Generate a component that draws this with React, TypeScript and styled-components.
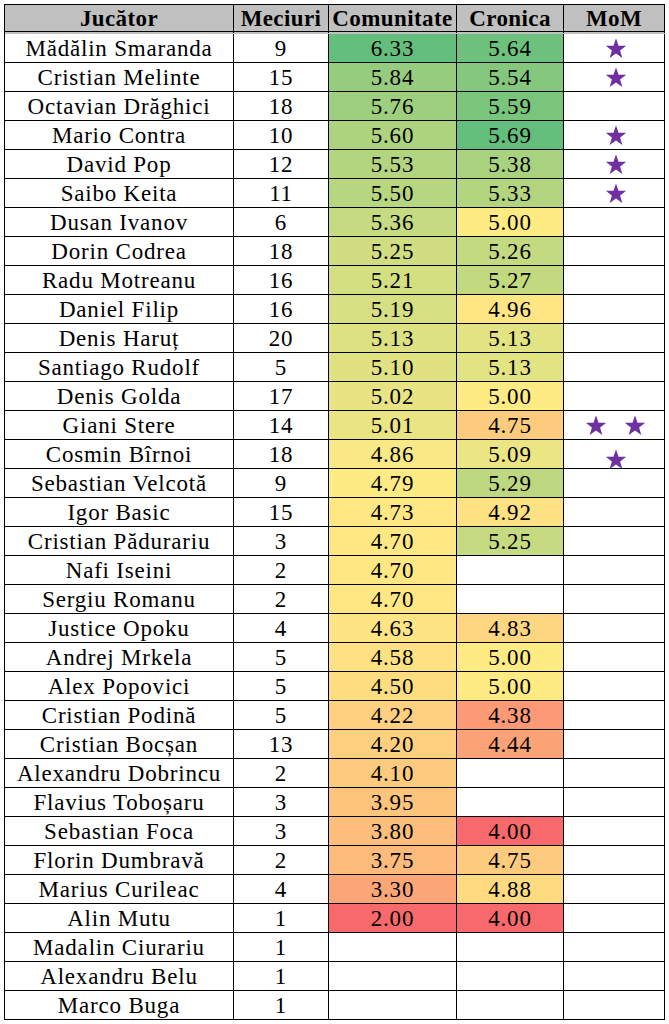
import React from "react"
import styled, { createGlobalStyle } from "styled-components"

type Row = {
  name: string
  games: number
  community?: number
  chronicle?: number
  mom?: number
  lowStar?: boolean
}

const rows: Row[] = [
  { name: "Mădălin Smaranda", games: 9, community: 6.33, chronicle: 5.64, mom: 1 },
  { name: "Cristian Melinte", games: 15, community: 5.84, chronicle: 5.54, mom: 1 },
  { name: "Octavian Drăghici", games: 18, community: 5.76, chronicle: 5.59 },
  { name: "Mario Contra", games: 10, community: 5.6, chronicle: 5.69, mom: 1 },
  { name: "David Pop", games: 12, community: 5.53, chronicle: 5.38, mom: 1 },
  { name: "Saibo Keita", games: 11, community: 5.5, chronicle: 5.33, mom: 1 },
  { name: "Dusan Ivanov", games: 6, community: 5.36, chronicle: 5.0 },
  { name: "Dorin Codrea", games: 18, community: 5.25, chronicle: 5.26 },
  { name: "Radu Motreanu", games: 16, community: 5.21, chronicle: 5.27 },
  { name: "Daniel Filip", games: 16, community: 5.19, chronicle: 4.96 },
  { name: "Denis Haruț", games: 20, community: 5.13, chronicle: 5.13 },
  { name: "Santiago Rudolf", games: 5, community: 5.1, chronicle: 5.13 },
  { name: "Denis Golda", games: 17, community: 5.02, chronicle: 5.0 },
  { name: "Giani Stere", games: 14, community: 5.01, chronicle: 4.75, mom: 2 },
  { name: "Cosmin Bîrnoi", games: 18, community: 4.86, chronicle: 5.09, mom: 1, lowStar: true },
  { name: "Sebastian Velcotă", games: 9, community: 4.79, chronicle: 5.29 },
  { name: "Igor Basic", games: 15, community: 4.73, chronicle: 4.92 },
  { name: "Cristian Pădurariu", games: 3, community: 4.7, chronicle: 5.25 },
  { name: "Nafi Iseini", games: 2, community: 4.7 },
  { name: "Sergiu Romanu", games: 2, community: 4.7 },
  { name: "Justice Opoku", games: 4, community: 4.63, chronicle: 4.83 },
  { name: "Andrej Mrkela", games: 5, community: 4.58, chronicle: 5.0 },
  { name: "Alex Popovici", games: 5, community: 4.5, chronicle: 5.0 },
  { name: "Cristian Podină", games: 5, community: 4.22, chronicle: 4.38 },
  { name: "Cristian Bocșan", games: 13, community: 4.2, chronicle: 4.44 },
  { name: "Alexandru Dobrincu", games: 2, community: 4.1 },
  { name: "Flavius Toboșaru", games: 3, community: 3.95 },
  { name: "Sebastian Foca", games: 3, community: 3.8, chronicle: 4.0 },
  { name: "Florin Dumbravă", games: 2, community: 3.75, chronicle: 4.75 },
  { name: "Marius Curileac", games: 4, community: 3.3, chronicle: 4.88 },
  { name: "Alin Mutu", games: 1, community: 2.0, chronicle: 4.0 },
  { name: "Madalin Ciurariu", games: 1 },
  { name: "Alexandru Belu", games: 1 },
  { name: "Marco Buga", games: 1 },
]

// excel style 3-colour scale: min red, median yellow, max green
const RED = [248, 105, 107]
const YELLOW = [255, 235, 132]
const GREEN = [99, 190, 123]

const mix = (a: number[], b: number[], t: number) =>
  `rgb(${a.map((v, i) => Math.round(v + (b[i] - v) * t)).join(",")})`

const makeScale = (values: number[]) => {
  const sorted = [...values].sort((a, b) => a - b)
  const min = sorted[0]
  const max = sorted[sorted.length - 1]
  const mid = sorted[Math.floor(sorted.length / 2)]
  return (v?: number) => {
    if (v === undefined) return "#ffffff"
    if (v >= mid) return mix(YELLOW, GREEN, (v - mid) / (max - mid))
    return mix(RED, YELLOW, (v - min) / (mid - min))
  }
}

const communityColor = makeScale(rows.filter((r) => r.community !== undefined).map((r) => r.community as number))
const chronicleColor = makeScale(rows.filter((r) => r.chronicle !== undefined).map((r) => r.chronicle as number))

const GlobalStyle = createGlobalStyle`
  body {
    margin: 0;
    background: #ffffff;
    font-family: "Liberation Serif", "Times New Roman", serif;
    color: #000000;
  }
`

const Page = styled.div`
  padding: 4px 0 0 4px;
`

const Table = styled.div`
  display: grid;
  grid-template-columns: 229px 95px 128px 107px 101px;
  grid-auto-rows: 29px;
  width: max-content;
  border-top: 1px solid #000;
  border-left: 1px solid #000;
`

const Cell = styled.div<{ $bg?: string }>`
  box-sizing: border-box;
  display: flex;
  align-items: center;
  justify-content: center;
  border-right: 1px solid #000;
  border-bottom: 1px solid #000;
  background: ${({ $bg }) => $bg || "#ffffff"};
  font-size: 23px;
  letter-spacing: 0.8px;
  white-space: nowrap;
  padding-top: 1px;
`

const HeadCell = styled(Cell)`
  height: 30px;
  background: #c0c0c0;
  border-bottom: 4px double #000;
  font-weight: bold;
  letter-spacing: 0.4px;
  padding-top: 2px;
`

const Stars = styled.div<{ $low?: boolean }>`
  display: flex;
  gap: 17px;
  margin-left: 3px;
  margin-top: ${({ $low }) => ($low ? "9px" : "0")};
`

const StarIcon = () => (
  <svg width="22" height="21" viewBox="0 0 24 23">
    <polygon
      fill="#7030a0"
      points="12,0.5 14.8,8.4 23.2,8.6 16.5,13.7 18.9,21.8 12,17 5.1,21.8 7.5,13.7 0.8,8.6 9.2,8.4"
    />
  </svg>
)

const fmt = (v?: number) => (v === undefined ? "" : v.toFixed(2))

export default function App() {
  return (
    <Page>
      <GlobalStyle />
      <Table>
        <HeadCell>Jucător</HeadCell>
        <HeadCell>Meciuri</HeadCell>
        <HeadCell>Comunitate</HeadCell>
        <HeadCell>Cronica</HeadCell>
        <HeadCell>MoM</HeadCell>
        {rows.map((r) => (
          <React.Fragment key={r.name}>
            <Cell>{r.name}</Cell>
            <Cell>{r.games}</Cell>
            <Cell $bg={communityColor(r.community)}>{fmt(r.community)}</Cell>
            <Cell $bg={chronicleColor(r.chronicle)}>{fmt(r.chronicle)}</Cell>
            <Cell>
              {r.mom ? (
                <Stars $low={r.lowStar}>
                  {Array.from({ length: r.mom }).map((_, i) => (
                    <StarIcon key={i} />
                  ))}
                </Stars>
              ) : null}
            </Cell>
          </React.Fragment>
        ))}
      </Table>
    </Page>
  )
}
